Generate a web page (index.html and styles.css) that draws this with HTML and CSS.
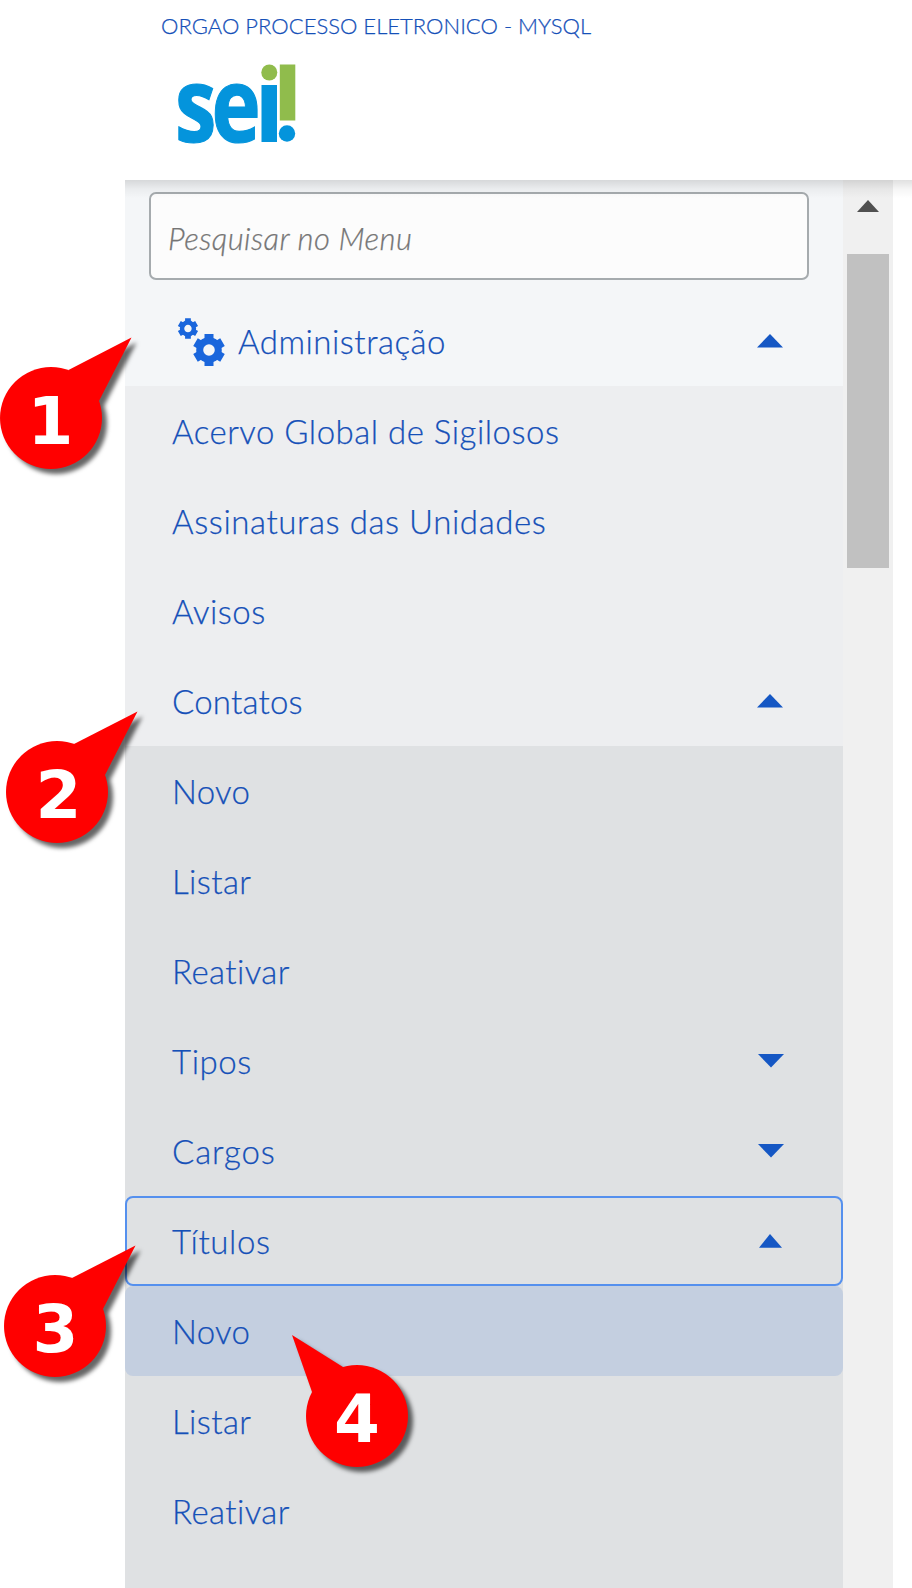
FILE: index.html
```html
<!DOCTYPE html>
<html lang="pt-BR">
<head>
<meta charset="utf-8">
<title>SEI</title>
<link rel="stylesheet" href="styles.css">
</head>
<body>
<header class="header">
  <div class="orgao"><span class="t t-orgao">ORGAO PROCESSO ELETRONICO - MYSQL</span></div>
  <svg class="logo" width="120" height="82" viewBox="0 0 120 82" role="img" aria-label="sei!">
    <g fill="#0494dc">
      <text class="logo-text" transform="translate(-2 79) scale(.8 1)" font-size="104" letter-spacing="-6">se</text>
      <rect x="84.5" y="22" width="15.5" height="57"/>
      <circle cx="110" cy="70.500" r="8.200"/>
    </g>
    <g fill="#90bc4c"><circle cx="92.300" cy="9.500" r="8"/><rect x="102.800" y="1.500" width="15.500" height="56"/></g>
  </svg>
</header>
<div class="main">
  <nav class="sidebar">
    <div class="search"><input class="search-input" type="text" placeholder="Pesquisar no Menu"></div>
    <a class="item item-root">
      <svg class="gears" width="50" height="50" viewBox="0 0 50 50">
        <g id="gear" transform="translate(34 33)" fill="none" stroke="#1a66dc">
          <circle r="9.300" stroke-width="7"/>
          <path stroke-width="9" d="M0-16V-9M0 16V9M13.500-7.800L8-4.600M13.500 7.800L8 4.600M-13.500-7.800L-8-4.600M-13.500 7.800L-8 4.600"/>
        </g>
        <use href="#gear" transform="translate(-8.800 -9.600) scale(.64)"/>
      </svg>
      <span class="t t-administracao">Administração</span>
      <svg class="arrow" width="28" height="16"><path d="M14 2L27 15.500H1z"/></svg>
    </a>
    <div class="level level-1">
      <a class="item"><span class="t t-acervo">Acervo Global de Sigilosos</span></a>
      <a class="item"><span class="t t-assinaturas">Assinaturas das Unidades</span></a>
      <a class="item"><span class="t t-avisos">Avisos</span></a>
      <a class="item"><span class="t t-contatos">Contatos</span><svg class="arrow" width="28" height="16"><path d="M14 2L27 15.500H1z"/></svg></a>
    </div>
    <div class="level level-2">
      <a class="item"><span class="t t-novo">Novo</span></a>
      <a class="item"><span class="t t-listar">Listar</span></a>
      <a class="item"><span class="t t-reativar">Reativar</span></a>
      <a class="item"><span class="t t-tipos">Tipos</span><svg class="arrow" width="28" height="16"><path d="M2 2H28L15 15.500z"/></svg></a>
      <a class="item"><span class="t t-cargos">Cargos</span><svg class="arrow" width="28" height="16"><path d="M2 2H28L15 15.500z"/></svg></a>
      <a class="item item-focus"><span class="t t-titulos">Títulos</span><svg class="arrow" width="28" height="16"><path d="M14 2L26 15.700H3z"/></svg></a>
      <a class="item item-active"><span class="t t-novo">Novo</span></a>
      <a class="item"><span class="t t-listar">Listar</span></a>
      <a class="item"><span class="t t-reativar">Reativar</span></a>
    </div>
  </nav>
  <div class="scrollbar">
    <svg class="scroll-up" width="22" height="12"><path d="M11 0L22 12H0z"/></svg>
    <div class="thumb"></div>
  </div>
</div>
<svg class="callouts" width="912" height="1588" viewBox="0 0 912 1588">
  <g class="callout"><path d="M68.500 370L131.500 337.500L99 401L51 418z"/><circle cx="51" cy="418" r="51"/></g>
  <g class="callout"><path d="M74 744L137.500 711.500L105 775L57 792z"/><circle cx="57" cy="792" r="51"/></g>
  <g class="callout"><path d="M72 1278L135.500 1245.500L103 1309L55 1326z"/><circle cx="55" cy="1326" r="51"/></g>
  <g class="callout"><path d="M343 1367L292 1335L312 1392L357 1416z"/><circle cx="357" cy="1416" r="51"/></g>
  <g class="number">
    <text x="50.500" y="444">1</text>
    <text x="58.500" y="818">2</text>
    <text x="55.500" y="1352">3</text>
    <text x="357" y="1442">4</text>
  </g>
</svg>
</body>
</html>
```

FILE: styles.css
```css
* { box-sizing: border-box; }
body {
  margin: 0;
  width: 912px;
  height: 1588px;
  overflow: hidden;
  position: relative;
  background: #fff;
  font-family: Lato, "Open Sans", sans-serif;
  font-weight: 300;
  color: #1550b8;
}
.t { white-space: nowrap; font-variant-ligatures: none; -webkit-text-stroke: .25px currentColor; }
.t-orgao { letter-spacing: .01px; }
.t-administracao, .t-acervo, .t-avisos { letter-spacing: .5px; }
.t-assinaturas, .t-titulos, .t-tipos { letter-spacing: .58px; }
.t-contatos { letter-spacing: .2px; }
.t-novo { letter-spacing: .3px; }
.t-listar, .t-reativar { letter-spacing: .4px; }
.t-cargos { letter-spacing: .9px; }
.header {
  position: relative;
  height: 180px;
  padding: 14px 0 0 161px;
}
.header::after {
  content: "";
  position: absolute;
  left: 125px;
  right: 0;
  top: 180px;
  height: 18px;
  background: linear-gradient(rgba(0,0,0,.12), rgba(0,0,0,.04) 50%, rgba(0,0,0,0));
}
.orgao { height: 24px; line-height: 24px; font-size: 22px; }
.logo { display: block; margin: 25px 0 0 16px; overflow: visible; }
.logo-text { font-family: "Open Sans", sans-serif; font-weight: 700; stroke: #0494dc; stroke-width: 1.2px; }
.main { display: flex; height: 1408px; padding-left: 125px; }
.sidebar { width: 718px; background: #f4f6f8; }
.search { height: 116px; padding: 12px 34px 0 24px; }
.search-input {
  display: block;
  width: 660px;
  height: 88px;
  padding: 4px 17px 0;
  border: 2px solid #a6abae;
  border-radius: 7px;
  background: #fcfcfc;
  font: italic 300 31px Lato, sans-serif;
  letter-spacing: .4px;
  -webkit-text-stroke: .25px #757575;
}
.search-input::placeholder { color: #757575; opacity: 1; }
.item {
  display: flex;
  align-items: center;
  height: 90px;
  padding: 0 59px 0 47px;
  font-size: 33px;
  line-height: 40px;
}
.arrow { margin-left: auto; margin-top: -2px; fill: #1557c4; }
.gears { margin: 2px 13px 0 3px; }
.level-1 { background: #edeef0; }
.level-2 { background: #dfe1e3; height: 842px; }
.item-focus {
  border: 2px solid #5590ee;
  border-radius: 8px;
  padding: 0 57px 0 45px;
}
.item-active { background: #c4cfe0; border-radius: 8px; }
.scrollbar { width: 50px; padding: 20px 4px 0; background: #f0f0f0; }
.scroll-up { display: block; margin-left: 10px; fill: #505050; }
.thumb { height: 314px; margin-top: 42px; background: #c1c1c1; }
.callouts { position: absolute; left: 0; top: 0; }
.callout { fill: #f00; filter: drop-shadow(5px 5px 2px rgba(0,0,0,.6)); }
.number { fill: #fff; font: 700 66px "DejaVu Sans", sans-serif; text-anchor: middle; }
```
